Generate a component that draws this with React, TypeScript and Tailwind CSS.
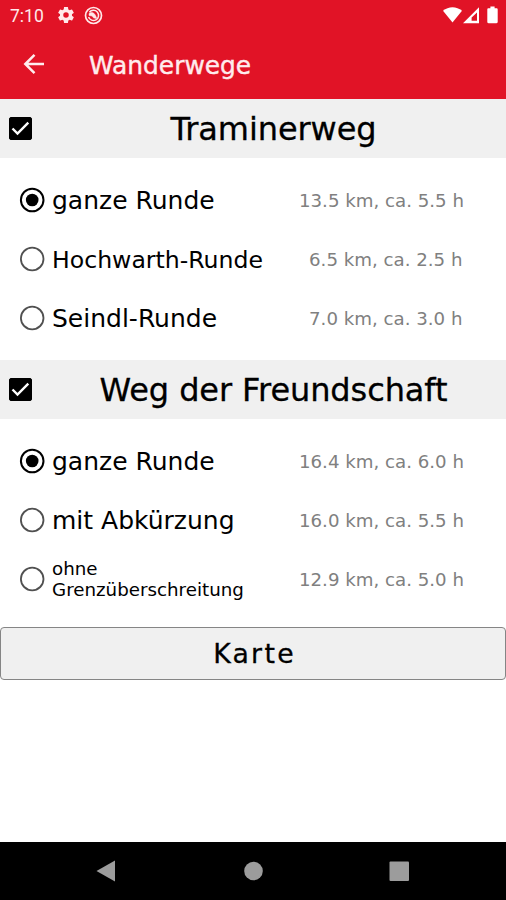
import { useState } from 'react';
import clsx from 'clsx';

interface Route {
  name: string;
  info: string;
  nameClass?: string;
  infoClass?: string;
}

interface Trail {
  title: string;
  routes: Route[];
}

const trails: Trail[] = [
  {
    title: 'Traminerweg',
    routes: [
      { name: 'ganze Runde', info: '13.5 km, ca. 5.5 h' },
      {
        name: 'Hochwarth-Runde',
        info: '6.5 km, ca. 2.5 h',
        nameClass: 'pt-[2px] text-[23.6px] leading-[30px]',
        infoClass: 'pr-[1.5px]',
      },
      { name: 'Seindl-Runde', info: '7.0 km, ca. 3.0 h', infoClass: 'pr-[1.5px]' },
    ],
  },
  {
    title: 'Weg der Freundschaft',
    routes: [
      { name: 'ganze Runde', info: '16.4 km, ca. 6.0 h' },
      { name: 'mit Abkürzung', info: '16.0 km, ca. 5.5 h' },
      {
        name: 'ohne Grenzüberschreitung',
        info: '12.9 km, ca. 5.0 h',
        nameClass: 'pb-px text-[18.25px] leading-[21px]',
      },
    ],
  },
];

function StatusBar() {
  return (
    <div className="flex h-8 items-center pl-[10px] pr-[7px] text-[#ffe9ea]">
      <span className="w-[46px] font-['Roboto',sans-serif] text-[17.5px] leading-8">7:10</span>
      <svg className="size-5 -translate-y-px" viewBox="0 0 24 24" fill="currentColor">
        <path d="M19.14 12.94c.04-.3.06-.61.06-.94 0-.32-.02-.64-.07-.94l2.03-1.58a.49.49 0 0 0 .12-.61l-1.92-3.32a.49.49 0 0 0-.59-.22l-2.39.96c-.5-.38-1.03-.7-1.62-.94l-.36-2.54a.48.48 0 0 0-.48-.41h-3.84c-.24 0-.43.17-.47.41l-.36 2.54c-.59.24-1.13.57-1.62.94l-2.39-.96a.48.48 0 0 0-.59.22L2.74 8.87c-.12.21-.08.47.12.61l2.03 1.58c-.05.3-.09.63-.09.94s.02.64.07.94l-2.03 1.58a.49.49 0 0 0-.12.61l1.92 3.32c.12.22.37.29.59.22l2.39-.96c.5.38 1.03.7 1.62.94l.36 2.54c.05.24.24.41.48.41h3.84c.24 0 .44-.17.47-.41l.36-2.54c.59-.24 1.13-.56 1.62-.94l2.39.96c.22.08.47 0 .59-.22l1.92-3.32a.48.48 0 0 0-.12-.61zM12 15.3a3.3 3.3 0 1 1 0-6.6 3.3 3.3 0 0 1 0 6.6" />
      </svg>
      <svg className="ml-2 size-[19px] -translate-y-px" viewBox="0 0 19 19" fill="none" stroke="currentColor">
        <circle cx="9.5" cy="9.5" r="8" strokeWidth="1.7" />
        <path d="M5.4 6.3A5.1 5.1 0 1 1 4.6 11" strokeWidth="1.5" />
        <path d="M5 7.5c2.5-2 6-1.2 7.7 4.8-2.6.4-3.8-.6-4.5-2.2L5 9.4z" fill="currentColor" strokeWidth=".5" />
      </svg>
      <svg className="ml-auto h-[18px] w-[56px] -translate-y-px" viewBox="0 0 56 18" fill="#fff">
        <path d="M0 4.8C5.5-.1 13.5-.1 19 4.8L9.5 16.5z" />
        <path fillRule="evenodd" d="M20 17.2 36 1.2v16zM28.6 14.8h5.4V6.4l-5.4 5.2z" />
        <path d="M47.4.5h4.2v1.7h1.9c.7 0 1.2.5 1.2 1.2V16c0 .7-.5 1.2-1.2 1.2h-8c-.7 0-1.2-.5-1.2-1.2V3.4c0-.7.5-1.2 1.2-1.2h1.9z" />
      </svg>
    </div>
  );
}

function Radio({ checked }: { checked: boolean }) {
  return (
    <svg className="size-[26px] shrink-0" viewBox="0 0 26 26">
      <circle
        cx="13.2"
        cy="13"
        r="11.3"
        fill="none"
        stroke={checked ? '#000' : '#505050'}
        strokeWidth={checked ? 2 : 1.8}
      />
      {checked && <circle cx="13.2" cy="13" r="6.3" />}
    </svg>
  );
}

function TrailSection({ trail }: { trail: Trail }) {
  const [enabled, setEnabled] = useState(true);
  const [selected, setSelected] = useState(0);

  return (
    <section>
      <div className="flex h-[59px] items-center bg-[#f0f0f0] pl-[9px]">
        <button onClick={() => setEnabled(!enabled)}>
          <svg className="block size-[23px]" viewBox="0 0 23 23">
            <rect
              x=".5"
              y=".5"
              width="22"
              height="22"
              rx="1.5"
              fill={enabled ? '#000' : 'none'}
              stroke="#000"
            />
            {enabled && <path d="m3.5 11.5 5 5L19.3 5.7" fill="none" stroke="#fff" strokeWidth="2.4" />}
          </svg>
        </button>
        <h2 className="ml-[9px] flex-1 pt-[2px] text-center text-[32px] tracking-[-0.1px] [-webkit-text-stroke:0.3px]">
          {trail.title}
        </h2>
      </div>
      <div className="flex flex-col pt-[13px] pb-[12px]">
        {trail.routes.map((route, index) => (
          <div
            key={route.name}
            className="flex h-[59px] cursor-pointer items-center pr-[42px] pl-[19px]"
            onClick={() => setSelected(index)}
          >
            <Radio checked={selected === index} />
            <span className={clsx('ml-[7px] w-[220px]', route.nameClass ?? 'pt-px text-[25px] leading-[30px]')}>
              {route.name}
            </span>
            <span className={clsx('ml-auto pt-[2px] text-[18.2px] whitespace-nowrap text-[#808080]', route.infoClass)}>
              {route.info}
            </span>
          </div>
        ))}
      </div>
    </section>
  );
}

export default function App() {
  return (
    <div className="flex h-[900px] w-[506px] flex-col overflow-hidden bg-white font-['DejaVu_Sans',sans-serif] text-black">
      <header className="h-[98.5px] shrink-0 bg-[#e11326]">
        <StatusBar />
        <div className="flex h-[66px] items-center pl-[23px] text-[#ffeced]">
          <svg className="size-[22px] -translate-y-px" viewBox="0 0 22 22" fill="none" stroke="currentColor" strokeWidth="2.5">
            <path d="M21 11H2.5M11.5 1.8 2.3 11l9.2 9.2" />
          </svg>
          <h1 className="ml-11 pt-[2px] text-[24.9px] [-webkit-text-stroke:0.4px]">Wanderwege</h1>
        </div>
      </header>

      <main className="flex-1">
        {trails.map((trail) => (
          <TrailSection key={trail.title} trail={trail} />
        ))}
        <button className="mt-[6px] h-[53px] w-full rounded-[4px] border-[1.5px] border-[#858585] bg-[#f0f0f0] pt-[3px] pl-[3px] text-[26.7px] tracking-[2.3px] [-webkit-text-stroke:0.3px]">
          Karte
        </button>
      </main>

      <nav className="flex h-[58px] shrink-0 bg-black">
        <svg className="h-[58px] w-full" viewBox="0 0 506 58" fill="#9c9c9c">
          <path d="M96.5 29 115 18.5v21z" />
          <circle cx="253.5" cy="29" r="9.3" />
          <rect x="389.5" y="19.5" width="19.5" height="19.5" rx="1" />
        </svg>
      </nav>
    </div>
  );
}
